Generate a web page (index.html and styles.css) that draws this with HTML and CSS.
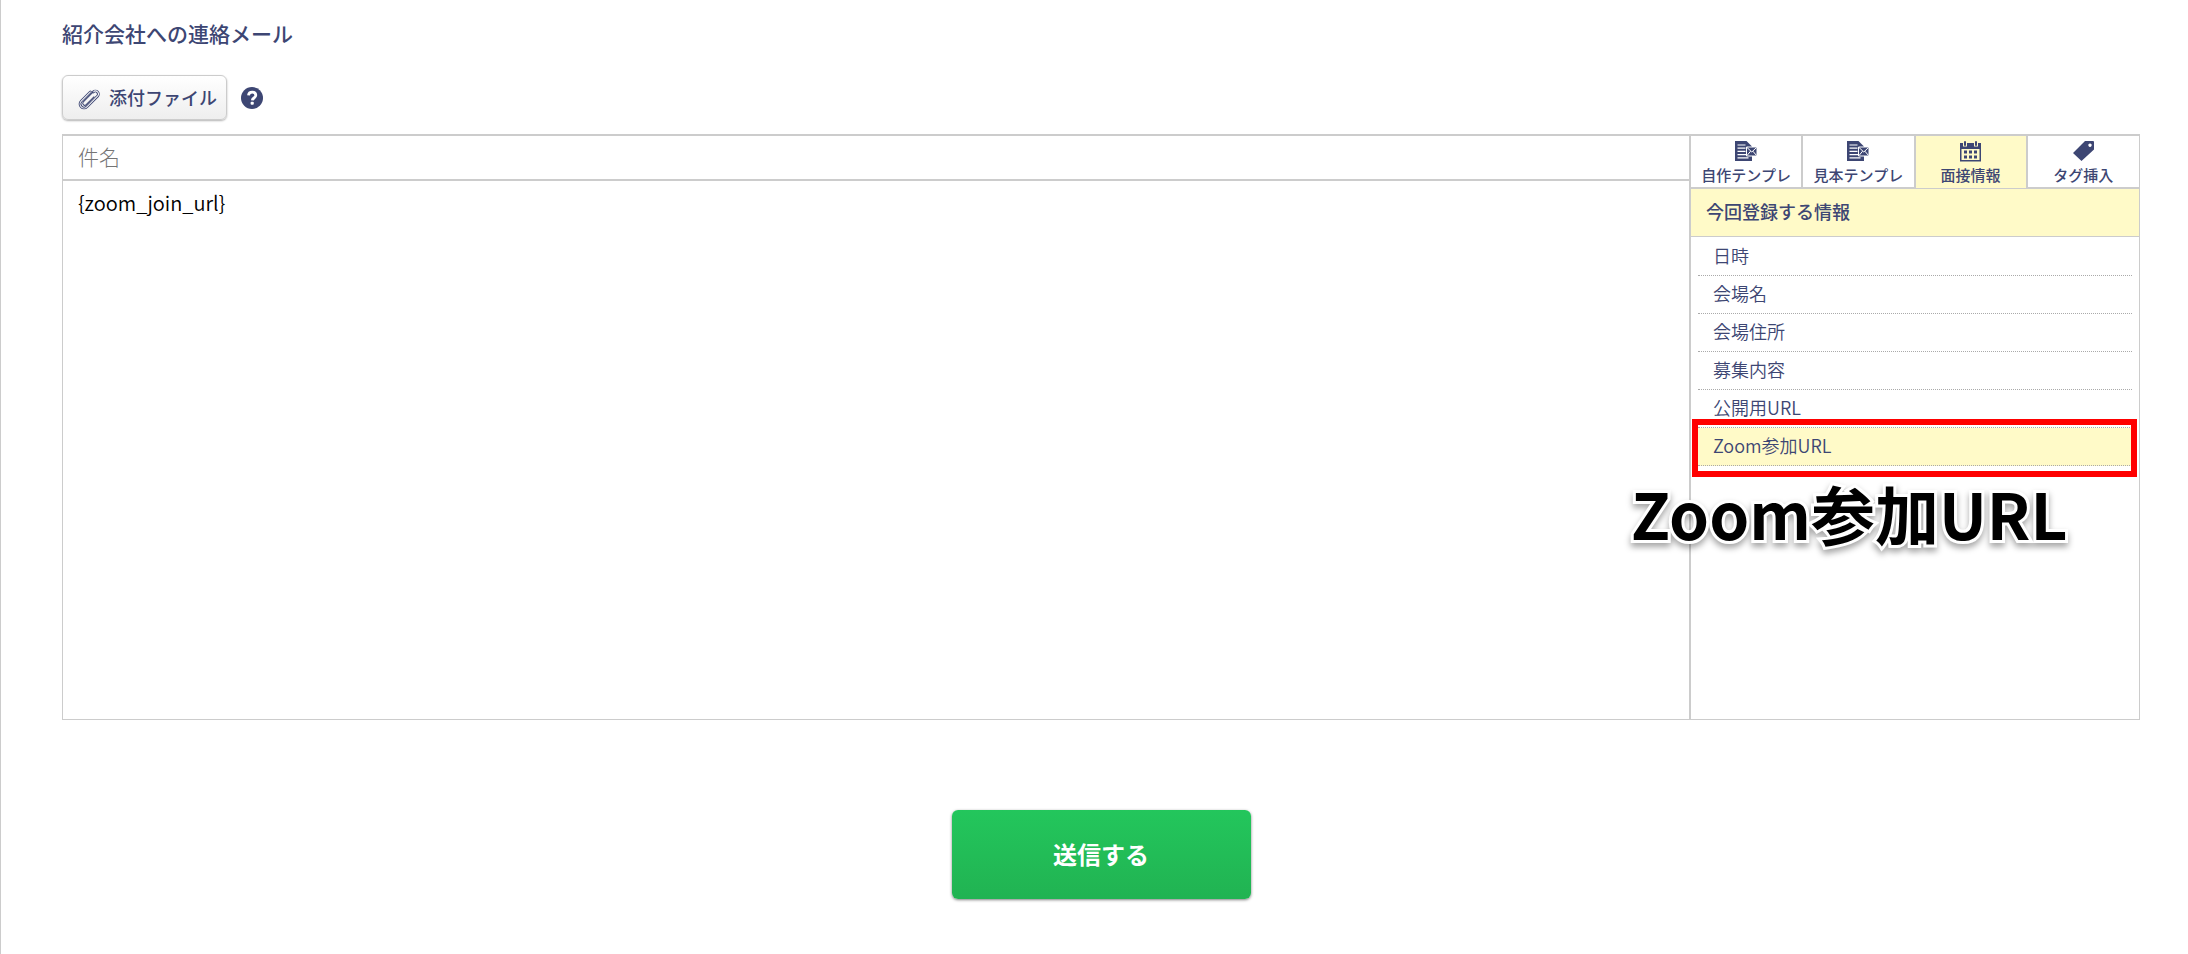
FILE: index.html
```
<!DOCTYPE html>
<html lang="ja">
<head>
  <meta charset="UTF-8">
  <meta name="viewport" content="width=device-width, initial-scale=1.0">
  <title>紹介会社への連絡メール</title>
  <link rel="stylesheet" href="styles.css">
</head>
<body>
  <form class="mail-form">
    <h2>紹介会社への連絡メール</h2>

    <div class="attach">
      <button type="button" class="attach-btn">
        <svg width="22" height="22" viewBox="0 0 22 22" fill="none" stroke-linecap="round">
          <g transform="rotate(45 11 11)">
            <path d="M7 5v13a4 4 0 0 0 8 0V3a3 3 0 0 0-6 0" stroke="currentColor" stroke-width="2.800"/>
            <path d="M7 5v13a4 4 0 0 0 8 0V3a3 3 0 0 0-6 0" stroke="#fafafa" stroke-width="1"/>
            <path d="M9 3v14a2 2 0 0 0 4 0V6" stroke="currentColor" stroke-width="1"/>
          </g>
        </svg>
        添付ファイル
      </button>
      <button type="button" class="help" aria-label="ヘルプ">
        <svg width="22" height="22" viewBox="0 0 22 22">
          <circle cx="11" cy="11" r="11" fill="currentColor"/>
          <path d="M7.500 8.300c.5-4.300 7.300-4.100 7.300 0 0 2.700-3.300 2.600-3.500 5" fill="none" stroke="#fff" stroke-width="2.800"/>
          <rect x="9.600" y="14.800" width="3.200" height="3" rx="1" fill="#fff"/>
        </svg>
      </button>
    </div>

    <div class="editor">
      <div class="compose">
        <input type="text" class="subject" placeholder="件名" aria-label="件名">
        <textarea class="body" aria-label="本文" spellcheck="false">{zoom_join_url}</textarea>
      </div>

      <div class="side">
        <div class="tabs">
          <button type="button" class="tab">
            <svg width="23" height="21" viewBox="0 0 23 21">
              <path d="M0 0h11.500L17 5.500V20H0z" fill="currentColor"/>
              <path d="M2.500 4h8M2.500 7.200h8M2.500 10.400h8M2.500 13.600h9M2.500 16.800h11" stroke="#fff" stroke-width="1.200"/>
              <path d="M11.500 6h10.500v9H11.500z" fill="currentColor" stroke="#fff" stroke-width="1"/>
              <path d="m12 6.500 4.800 4.500L21.500 6.500M12 14.500l3.600-4.300M21.500 14.500l-3.600-4.300" fill="none" stroke="#fff" stroke-width="1"/>
            </svg>
            自作テンプレ
          </button>
          <button type="button" class="tab">
            <svg width="23" height="21" viewBox="0 0 23 21">
              <path d="M0 0h11.500L17 5.500V20H0z" fill="currentColor"/>
              <path d="M2.500 4h8M2.500 7.200h8M2.500 10.400h8M2.500 13.600h9M2.500 16.800h11" stroke="#fff" stroke-width="1.200"/>
              <path d="M11.500 6h10.500v9H11.500z" fill="currentColor" stroke="#fff" stroke-width="1"/>
              <path d="m12 6.500 4.800 4.500L21.500 6.500M12 14.500l3.600-4.300M21.500 14.500l-3.600-4.300" fill="none" stroke="#fff" stroke-width="1"/>
            </svg>
            見本テンプレ
          </button>
          <button type="button" class="tab active">
            <svg width="23" height="21" viewBox="0 0 23 21" fill="currentColor">
              <path fill-rule="evenodd" d="M1 2h3v3.500h4V2h7v3.500h4V2h3v18.500H1zM2.500 8v11h18V8z"/>
              <rect x="5" y="0" width="2" height="5" rx="1"/>
              <rect x="16" y="0" width="2" height="5" rx="1"/>
              <path d="M5 9.500h3v3H5zM10 9.500h3v3h-3zM15 9.500h3v3h-3zM5 14.500h3v3H5zM10 14.500h3v3h-3zM15 14.500h3v3h-3z"/>
            </svg>
            面接情報
          </button>
          <button type="button" class="tab">
            <svg width="23" height="21" viewBox="0 0 23 21">
              <path fill="currentColor" fill-rule="evenodd" d="M13 0h8q1 0 1 1v7.500L9.500 20 1 12zM18 2.500a1.700 1.700 0 1 0 .01 0z"/>
            </svg>
            タグ挿入
          </button>
        </div>
        <h3>今回登録する情報</h3>
        <ul class="tags">
          <li><button type="button">日時</button></li>
          <li><button type="button">会場名</button></li>
          <li><button type="button">会場住所</button></li>
          <li><button type="button">募集内容</button></li>
          <li><button type="button">公開用URL</button></li>
          <li class="selected">
            <button type="button">Zoom参加URL</button>
            <span class="callout">Zoom参加URL</span>
          </li>
        </ul>
      </div>
    </div>

    <button type="submit" class="submit">送信する</button>
  </form>
</body>
</html>
```
FILE: styles.css
```
:root {
  --navy: #3d4673;
  --line: #ccc;
  --yellow: #fffac8;
}

* {
  box-sizing: border-box;
}

body {
  margin: 0;
  background: #fff;
  color: var(--navy);
  font-family: "Noto Sans CJK JP", sans-serif;
}

button, input, textarea {
  font-family: inherit;
  color: inherit;
}

button {
  margin: 0;
  padding: 0;
  border: 0;
  background: none;
  cursor: pointer;
}

.mail-form {
  display: flex;
  flex-direction: column;
  min-height: 100vh;
  padding: 17px 48px 54px 61px;
  border-left: 1px solid var(--line);
}

h2 {
  margin: 0 0 26px;
  font-size: 21px;
  font-weight: 500;
  line-height: 32px;
}

.attach {
  display: flex;
  align-items: center;
  gap: 14px;
  margin-bottom: 14px;
}

.attach-btn {
  display: flex;
  align-items: center;
  gap: 9px;
  height: 45px;
  padding: 0 9px 2px 15px;
  border: 1px solid var(--line);
  border-radius: 6px;
  background: linear-gradient(#fff, #eee);
  box-shadow: 0 1px 2px rgba(0, 0, 0, 0.3);
  font-size: 18px;
  font-weight: 500;
}

.attach-btn svg {
  margin-top: 4px;
}

.help {
  display: flex;
}

/* editor */
.editor {
  display: flex;
  height: 586px;
  border: 1px solid var(--line);
  border-top-width: 2px;
}

.compose {
  flex: 1;
  display: flex;
  flex-direction: column;
}

.subject {
  height: 45px;
  padding: 0 15px 4px;
  border: 0;
  border-bottom: 2px solid var(--line);
  font-size: 21px;
  font-weight: 300;
}

.subject::placeholder {
  color: #757575;
}

.body {
  flex: 1;
  padding: 7px 15px;
  border: 0;
  resize: none;
  color: #000;
  font-size: 20px;
  font-weight: 350;
  line-height: 30px;
}

.side {
  width: 450px;
  border-left: 2px solid var(--line);
}

.tabs {
  display: grid;
  grid-template-columns: repeat(4, 1fr);
  margin-right: -1px;
  background: var(--yellow);
}

.tab {
  display: flex;
  flex-direction: column;
  align-items: center;
  gap: 3px;
  height: 53px;
  padding-top: 5px;
  border-right: 2px solid var(--line);
  border-bottom: 2px solid var(--line);
  background: #fff;
  font-size: 15px;
  font-weight: 500;
  line-height: 20px;
}

.tab:last-child {
  border-right-width: 1px;
}

.tab.active {
  background: var(--yellow);
  border-bottom-width: 1px;
}

h3 {
  margin: 0;
  padding: 0 15px 2px;
  border-bottom: 1px solid var(--line);
  background: var(--yellow);
  font-size: 18px;
  font-weight: 500;
  line-height: 45px;
}

.tags {
  margin: 0;
  padding: 1px 7px;
  list-style: none;
}

.tags li {
  position: relative;
  border-bottom: 1px dotted #aaa;
}

.tags button {
  width: 100%;
  height: 37px;
  padding: 0 15px 3px;
  text-align: left;
  font-size: 18px;
  font-weight: 350;
}

.tags .selected {
  background: var(--yellow);
}

/* red frame round the selected tag */
.selected::after {
  content: "";
  position: absolute;
  inset: -9px -5px -12px -6px;
  border: 6px solid #f00;
  pointer-events: none;
}

.callout {
  position: absolute;
  top: 39px;
  left: -67px;
  color: #000;
  font-size: 64px;
  font-weight: 700;
  line-height: 90px;
  white-space: nowrap;
  -webkit-text-stroke: 6px #fff;
  paint-order: stroke fill;
  filter: drop-shadow(0 4px 3px rgba(0, 0, 0, 0.35));
}

.submit {
  align-self: center;
  width: 299px;
  height: 89px;
  margin-top: 90px;
  padding-bottom: 2px;
  border-radius: 6px;
  background: linear-gradient(#23c65c, #21b352);
  box-shadow: 0 1px 3px rgba(0, 0, 0, 0.5);
  color: #fff;
  font-size: 24px;
  font-weight: 700;
}
```
